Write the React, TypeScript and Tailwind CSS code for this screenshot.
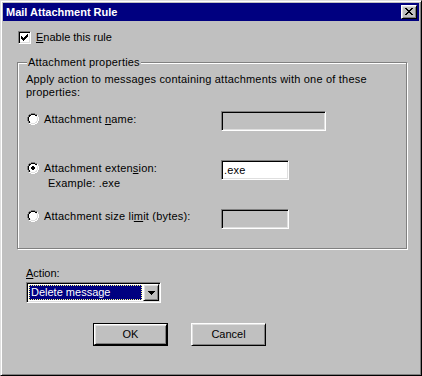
import React from 'react';

const raised =
  'border border-t-white border-l-white border-b-black border-r-black shadow-[inset_1px_1px_#dfdfdf,inset_-1px_-1px_#808080]';
const sunken =
  'border border-t-[#808080] border-l-[#808080] border-b-white border-r-white shadow-[inset_1px_1px_#000,inset_-1px_-1px_#dfdfdf]';

function Pixels({rows, fill, w, h}: {rows: string[]; fill: string; w: number; h: number}) {
  return (
    <svg width={w} height={h} shapeRendering="crispEdges" className="block">
      {rows.flatMap((row, j) =>
        row.split('').map((c, i) =>
          c === '#' ? <rect key={`${i}-${j}`} x={i} y={j} width={1} height={1} fill={fill}/> : null,
        ),
      )}
    </svg>
  );
}

function Radio({checked}: {checked?: boolean}) {
  const px: React.ReactNode[] = [];
  for (let y = 0; y < 12; y++) {
    for (let x = 0; x < 12; x++) {
      const dx = x + 0.5 - 6;
      const dy = y + 0.5 - 6;
      const d = Math.hypot(dx, dy);
      if (d > 6) continue;
      const dark = dx + dy <= 0;
      let fill = '#ffffff';
      if (d > 5) fill = dark ? '#808080' : '#ffffff';
      else if (d > 4) fill = dark ? '#000000' : '#dfdfdf';
      else if (checked && Math.abs(dx) < 2 && Math.abs(dy) < 2 && !(Math.abs(dx) > 1 && Math.abs(dy) > 1)) fill = '#000000';
      px.push(<rect key={`${x}-${y}`} x={x} y={y} width={1} height={1} fill={fill}/>);
    }
  }
  return (
    <svg width={12} height={12} shapeRendering="crispEdges" className="block shrink-0">
      {px}
    </svg>
  );
}

function Checkbox() {
  return (
    <div className={`w-[13px] h-[13px] bg-white shrink-0 pl-[2px] pt-[2px] ${sunken}`}>
      <Pixels
        w={7}
        h={7}
        fill="#000"
        rows={['......#', '.....##', '#...###', '##.###.', '#####..', '.###...', '..#....']}
      />
    </div>
  );
}

function TextBox({value, width}: {value?: string; width: number}) {
  return (
    <div
      className={`h-[20px] flex items-center pl-[2px] ${sunken} ${value !== undefined ? 'bg-white' : 'bg-[#c0c0c0]'}`}
      style={{width}}
    >
      {value}
    </div>
  );
}

function RadioRow({label, checked}: {label: React.ReactNode; checked?: boolean}) {
  return (
    <div className="flex items-center gap-[5px] h-[12px]">
      <Radio checked={checked}/>
      <span className="leading-[13px] whitespace-nowrap">{label}</span>
    </div>
  );
}

export default function App() {
  return (
    <div
      className={`w-[422px] h-[376px] bg-[#c0c0c0] flex flex-col p-[2px] text-[11px] leading-[13px] text-black font-['Liberation_Sans',Arial,sans-serif] border border-t-[#dfdfdf] border-l-[#dfdfdf] border-b-black border-r-black shadow-[inset_1px_1px_#fff,inset_-1px_-1px_#808080]`}
    >
      <div className="h-[18px] bg-[#000080] flex items-center justify-between pl-[3px] pr-[2px]">
        <span className="text-white font-bold">Mail Attachment Rule</span>
        <div className={`w-[16px] h-[14px] bg-[#c0c0c0] pl-[3px] pt-[2px] ${raised}`}>
          <Pixels
            w={8}
            h={7}
            fill="#000"
            rows={['##....##', '.##..##.', '..####..', '...##...', '..####..', '.##..##.', '##....##']}
          />
        </div>
      </div>

      <div className="flex items-center gap-[5px] mt-[10px] ml-[15px]">
        <Checkbox/>
        <span>
          <span className="underline">E</span>nable this rule
        </span>
      </div>

      <div className="relative mt-[18px] ml-[14px] w-[390px] border border-[#808080] shadow-[inset_1px_1px_#fff,1px_1px_#fff] pt-[10px] pl-[8px] pb-[19px] tracking-[0.2px]">
        <span className="absolute -top-[7px] left-[9px] px-[1px] bg-[#c0c0c0]">Attachment properties</span>
        <p className="w-[370px]">Apply action to messages containing attachments with one of these properties:</p>

        <div className="grid grid-cols-[194px_auto] mt-[12px] ml-[1px]">
          <div className="pt-[2px]">
            <RadioRow label={<>Attachment <span className="underline">n</span>ame:</>}/>
          </div>
          <TextBox width={105}/>
        </div>

        <div className="grid grid-cols-[194px_auto] mt-[29px] ml-[1px] items-start">
          <div className="pt-[2px]">
            <RadioRow checked label={<>Attachment exten<span className="underline">s</span>ion:</>}/>
            <div className="mt-[3px] pl-[21px]">Example: .exe</div>
          </div>
          <TextBox width={68} value=".exe"/>
        </div>

        <div className="grid grid-cols-[194px_auto] mt-[19px] ml-[1px]">
          <div className="pt-[1px]">
            <RadioRow label={<>Attachment size li<span className="underline">m</span>it (bytes):</>}/>
          </div>
          <TextBox width={68}/>
        </div>
      </div>

      <div className="mt-[18px] ml-[23px]">
        <span className="underline">A</span>ction:
      </div>
      <div className={`mt-[2px] ml-[23px] w-[135px] h-[21px] bg-white flex p-[1px] ${sunken}`}>
        <div className="flex-1 m-[1px] bg-[#000080] border border-dotted border-[#ffff80] text-white pl-[1px] flex items-center">
          Delete message
        </div>
        <div className={`w-[16px] h-[17px] bg-[#c0c0c0] flex items-center justify-center ${raised}`}>
          <Pixels w={7} h={4} fill="#000" rows={['#######', '.#####.', '..###..', '...#...']}/>
        </div>
      </div>

      <div className="flex mt-[20px] ml-[90px] gap-[23px]">
        <div className="w-[75px] h-[23px] border border-black">
          <div className={`w-full h-full flex items-center justify-center ${raised}`}>OK</div>
        </div>
        <div className={`w-[75px] h-[23px] flex items-center justify-center ${raised}`}>Cancel</div>
      </div>
    </div>
  );
}
